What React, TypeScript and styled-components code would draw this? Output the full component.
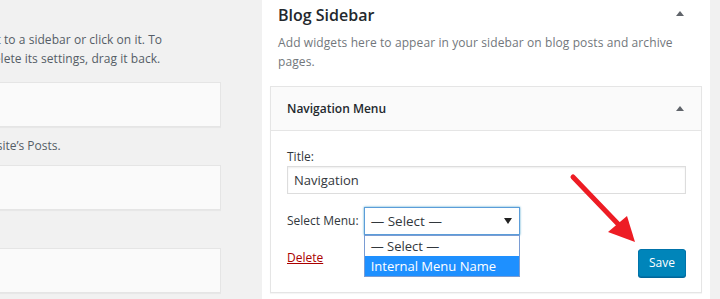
import React from 'react';
import styled, { createGlobalStyle } from 'styled-components';

const GlobalStyle = createGlobalStyle`
  html,
  body {
    margin: 0;
    padding: 0;
    background: #f1f1f1;
  }

  body {
    font-family: 'Open Sans', 'Noto Sans', sans-serif;
    font-size: 12px;
    color: #444;
  }
`;

const Page = styled.div`
  position: relative;
  display: flex;
  align-items: stretch;
  height: 299px;
  overflow: hidden;
`;

/* Available widgets column, cut off by the left edge */
const Available = styled.div`
  flex: none;
  width: 221px;
  overflow: hidden;
`;

const AvailableInner = styled.div`
  width: 371px;
  margin-left: -150px;
`;

const Intro = styled.p`
  margin: 30px 0 14px;
  line-height: 19px;
  letter-spacing: 0.05px;
  color: #555d66;
  white-space: nowrap;
`;

const Tile = styled.div`
  box-sizing: border-box;
  height: 45px;
  background: #fafafa;
  border: 1px solid #e5e5e5;
  box-shadow: 0 1px 1px rgba(0, 0, 0, 0.04);
`;

const TileDesc = styled.div`
  box-sizing: border-box;
  height: 38px;
  padding-top: 10px;
  line-height: 18px;
  color: #555d66;
  white-space: nowrap;
`;

/* Blog Sidebar panel */
const Sidebar = styled.section`
  flex: none;
  width: 448px;
  margin-left: 41px;
  background: #fff;
`;

const SidebarHead = styled.div`
  display: flex;
  justify-content: space-between;
  align-items: flex-start;
  padding: 5px 26px 0 16px;
`;

const SidebarTitle = styled.h2`
  margin: 0;
  font-size: 16px;
  line-height: 20px;
  font-weight: 600;
  color: #23282d;
`;

const Toggle = styled.span<{ $offset?: number }>`
  display: block;
  width: 0;
  height: 0;
  margin-top: ${(p) => p.$offset ?? 0}px;
  border-left: 4px solid transparent;
  border-right: 4px solid transparent;
  border-bottom: 5px solid #60646a;
`;

const SidebarDesc = styled.p`
  margin: 9px 0 15px;
  padding: 0 16px;
  line-height: 18.5px;
  letter-spacing: 0.1px;
  color: #72777c;
`;

const Widget = styled.div`
  margin: 0 8px;
  border: 1px solid #e5e5e5;
  box-shadow: 0 1px 1px rgba(0, 0, 0, 0.04);
`;

const WidgetTop = styled.div`
  display: flex;
  justify-content: space-between;
  align-items: center;
  height: 43px;
  padding: 0 17px 0 16px;
  background: #fafafa;
  border-bottom: 1px solid #e5e5e5;
`;

const WidgetTitle = styled.h3`
  margin: 0;
  font-size: 12px;
  font-weight: 600;
  color: #23282d;
`;

const WidgetBody = styled.div`
  padding: 17px 15px 15px 16px;
  background: #fff;
`;

const Label = styled.label`
  display: block;
  line-height: 18px;
  color: #32373c;
`;

const TextInput = styled.input`
  box-sizing: border-box;
  display: block;
  width: 100%;
  height: 28px;
  margin: 0;
  padding: 0 6px;
  border: 1px solid #ddd;
  box-shadow: inset 0 1px 2px rgba(0, 0, 0, 0.07);
  font-family: inherit;
  font-size: 13px;
  color: #32373c;
  background: #fff;
  outline: none;
`;

const SelectRow = styled.div`
  display: flex;
  align-items: center;
  gap: 5px;
  margin-top: 13px;
`;

const SelectWrap = styled.div`
  position: relative;
  width: 156px;
`;

const SelectBox = styled.div`
  box-sizing: border-box;
  display: flex;
  justify-content: space-between;
  align-items: center;
  height: 28px;
  padding: 0 7px 0 6px;
  border: 1px solid #5b9dd9;
  box-shadow: 0 0 2px rgba(30, 140, 190, 0.8);
  font-size: 13.5px;
  color: #32373c;
  background: #fff;
`;

const Caret = styled.span`
  width: 0;
  height: 0;
  border-left: 4px solid transparent;
  border-right: 4px solid transparent;
  border-top: 6px solid #222;
`;

const Options = styled.ul`
  position: absolute;
  top: 100%;
  left: 0;
  right: 0;
  z-index: 2;
  margin: 0;
  padding: 0;
  list-style: none;
  border: 1px solid #7a9cd3;
  background: #fff;
`;

const Option = styled.li<{ $active?: boolean }>`
  height: 20px;
  padding: 0 6px;
  line-height: 20px;
  font-size: 13px;
  color: ${(p) => (p.$active ? '#fff' : '#32373c')};
  background: ${(p) => (p.$active ? '#1e90ff' : '#fff')};
`;

const Actions = styled.div`
  display: flex;
  justify-content: space-between;
  align-items: flex-start;
  margin-top: 14px;
`;

const DeleteLink = styled.a`
  line-height: 18px;
  color: #a00;
  text-decoration: underline;
  cursor: pointer;
`;

const SaveButton = styled.button`
  box-sizing: border-box;
  height: 28px;
  margin: 0;
  padding: 0 10px;
  border: 1px solid #0073aa;
  border-radius: 3px;
  background: #0085ba;
  box-shadow: 0 1px 0 #006799;
  font-family: inherit;
  font-size: 12px;
  line-height: 26px;
  color: #fff;
  cursor: pointer;
`;

const Pointer = styled.svg`
  position: absolute;
  left: 560px;
  top: 165px;
  pointer-events: none;
`;

const App: React.FC = () => {
  return (
    <>
      <GlobalStyle />
      <Page>
        <Available>
          <AvailableInner>
            <Intro>
              To activate a widget drag it to a sidebar or click on it. To
              <br />
              deactivate a widget and delete its settings, drag it back.
            </Intro>
            <Tile />
            <TileDesc>A monthly archive of your site’s Posts.</TileDesc>
            <Tile />
            <TileDesc>Arbitrary text.</TileDesc>
            <Tile />
          </AvailableInner>
        </Available>

        <Sidebar>
          <SidebarHead>
            <SidebarTitle>Blog Sidebar</SidebarTitle>
            <Toggle $offset={6} />
          </SidebarHead>
          <SidebarDesc>
            Add widgets here to appear in your sidebar on blog posts and archive pages.
          </SidebarDesc>

          <Widget>
            <WidgetTop>
              <WidgetTitle>Navigation Menu</WidgetTitle>
              <Toggle />
            </WidgetTop>
            <WidgetBody>
              <Label htmlFor="nav-title">Title:</Label>
              <TextInput id="nav-title" value="Navigation" readOnly />
              <SelectRow>
                <Label as="span">Select Menu:</Label>
                <SelectWrap>
                  <SelectBox>
                    <span>— Select —</span>
                    <Caret />
                  </SelectBox>
                  <Options>
                    <Option>— Select —</Option>
                    <Option $active>Internal Menu Name</Option>
                  </Options>
                </SelectWrap>
              </SelectRow>
              <Actions>
                <DeleteLink>Delete</DeleteLink>
                <SaveButton>Save</SaveButton>
              </Actions>
            </WidgetBody>
          </Widget>
        </Sidebar>

        <Pointer width={90} height={90} viewBox="0 0 90 90">
          <line x1={13} y1={12} x2={60} y2={61} stroke="#ed1c24" strokeWidth={5} strokeLinecap="round" />
          <polygon points="75,77 48,67 67,51" fill="#ed1c24" />
        </Pointer>
      </Page>
    </>
  );
};

export default App;
